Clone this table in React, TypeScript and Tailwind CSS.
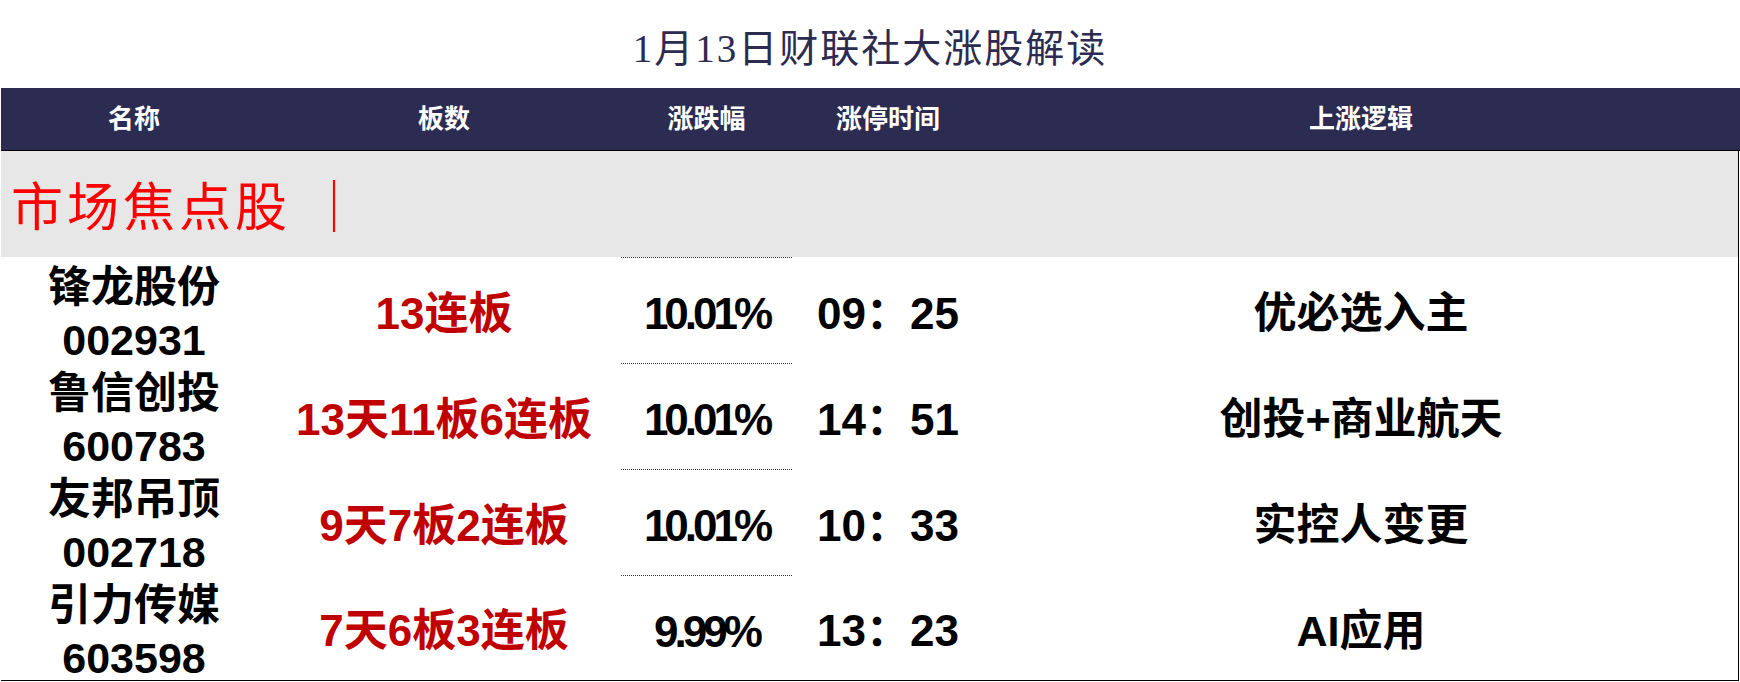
import React from "react";

const rows = [
  { name: "锋龙股份", code: "002931", board: "13连板", pct: "10.01%", time: "09：25", logic: "优必选入主", h: "h-[106px]" },
  { name: "鲁信创投", code: "600783", board: "13天11板6连板", pct: "10.01%", time: "14：51", logic: "创投+商业航天", h: "h-[106px]" },
  { name: "友邦吊顶", code: "002718", board: "9天7板2连板", pct: "10.01%", time: "10：33", logic: "实控人变更", h: "h-[106px]" },
  { name: "引力传媒", code: "603598", board: "7天6板3连板", pct: "9.99%", time: "13：23", logic: "AI应用", h: "h-[105px]" },
];

const sans = "font-['Liberation_Sans','Noto_Sans_CJK_SC',sans-serif]";
const serif = "font-['Liberation_Serif','Noto_Sans_CJK_SC',serif]";

export default function App() {
  return (
    <div className="w-[1740px] h-[682px] bg-white overflow-hidden">
      <div className={`h-[88px] flex items-center justify-center pt-[9px] ${serif} text-[39px] tracking-[2px] text-[#2d2c50] leading-none`}>
        1月13日财联社大涨股解读
      </div>
      <div className="pl-[1px]">
        <div className={`h-[63px] bg-[#2c2b51] border-b border-black flex items-center text-white font-bold text-[26px] ${sans}`}>
          <div className="w-[266px] text-center">名称</div>
          <div className="w-[354px] text-center">板数</div>
          <div className="w-[171px] text-center">涨跌幅</div>
          <div className="w-[192px] text-center">涨停时间</div>
          <div className="flex-1 text-center pr-[2px]">上涨逻辑</div>
        </div>
        <div className="w-[1738px] border-r border-b border-black">
          <div className={`h-[106px] bg-[#e7e7e7] flex items-center pl-[10px] pt-[10px] ${serif} text-[52px] tracking-[4px] text-[#ff0000] leading-none whitespace-pre`}>
            市场焦点股 ｜
          </div>
          {rows.map((r) => (
            <div key={r.code} className={`${r.h} flex ${sans}`}>
              <div className="w-[266px] flex flex-col items-center pt-[4px] text-black text-[43px]">
                <div className="leading-[53px] font-bold">{r.name}</div>
                <div className="leading-[53px] font-bold">{r.code}</div>
              </div>
              <div className="w-[354px] flex items-center justify-center pt-[7px] text-[44px] font-bold text-[#c00000] leading-none">
                {r.board}
              </div>
              <div className="w-[171px] flex items-center justify-center pt-[7px] text-[44px] font-bold tracking-[-4px] text-black leading-none border-t border-dotted border-[#333]">
                {r.pct}
              </div>
              <div className="w-[192px] flex items-center justify-center pt-[7px] text-[44px] font-bold text-black leading-none">
                {r.time}
              </div>
              <div className="flex-1 flex items-center justify-center pt-[7px] text-[43px] font-bold text-black leading-none">
                {r.logic}
              </div>
            </div>
          ))}
        </div>
      </div>
    </div>
  );
}
